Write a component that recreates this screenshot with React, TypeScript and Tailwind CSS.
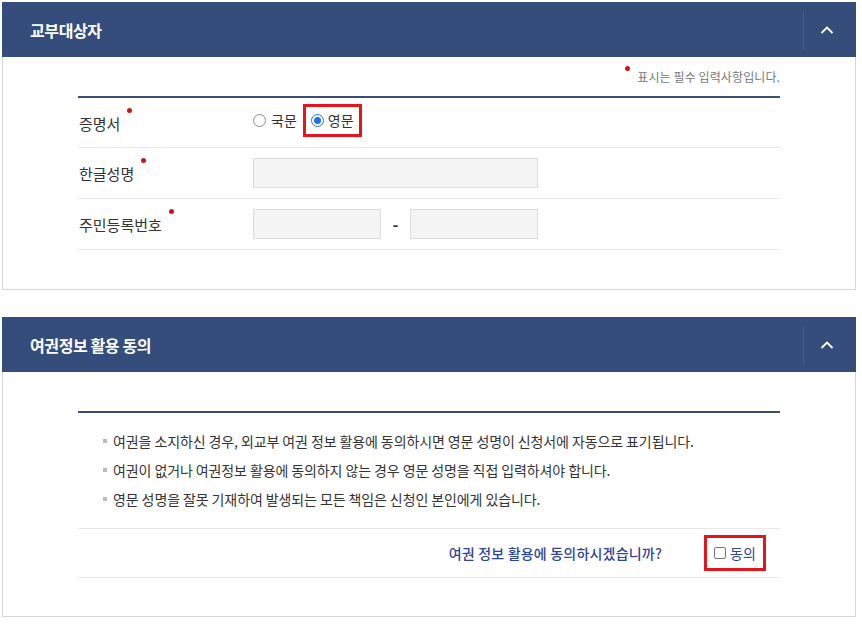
import React from 'react';

const FONT = { fontFamily: '"Noto Sans CJK KR", "Noto Sans", sans-serif' };

// ── Section header with collapse chevron ──
function PanelHeader({ title }: { title: string }) {
  return (
    <div className="h-[55px] bg-[#354d7a] flex items-center justify-between">
      <h2 className="pl-[28px] text-white text-[16px] font-bold tracking-[-0.4px] leading-none">{title}</h2>
      <div className="h-full flex items-center">
        <div className="w-px h-[38px] bg-[#4a5f88]" />
        <button className="w-[46px] mr-[6px] h-full flex items-center justify-center">
          <svg width="14" height="8" viewBox="0 0 14 8" fill="none">
            <polyline points="1.5,7 7,1.5 12.5,7" stroke="#ffffff" strokeWidth="1.8" />
          </svg>
        </button>
      </div>
    </div>
  );
}

function Req() {
  return <span className="absolute -right-[12px] -top-[5px] w-[5px] h-[5px] rounded-full bg-[#c8161d]" />;
}

function FieldRow({ label, h, children }: { label: string; h: string; children: React.ReactNode }) {
  return (
    <div className={`${h} flex items-center border-b border-[#e8e8e8]`}>
      <div className="w-[175px] pl-[1px]">
        <span className="relative text-[15px] text-[#333] leading-none">
          {label}
          <Req />
        </span>
      </div>
      {children}
    </div>
  );
}

const inputCls = 'h-[30px] bg-[#f4f4f4] border border-[#dcdcdc]';

export default function App() {
  return (
    <div className="min-h-screen bg-white pt-[2px] pl-[2px]" style={FONT}>
      {/* ── 교부대상자 ── */}
      <section className="w-[854px]">
        <PanelHeader title="교부대상자" />
        <div className="border-x border-b border-[#d6d6d6] px-[75px] pt-[11px] pb-[39px]">
          <div className="h-[17px] flex justify-end items-center">
            <span className="relative text-[12px] text-[#777] leading-none tracking-[0.1px]">
              <span className="absolute -left-[12px] -top-[5px] w-[5px] h-[5px] rounded-full bg-[#c8161d]" />
              표시는 필수 입력사항입니다.
            </span>
          </div>
          <div className="mt-[11px] h-[2px] bg-[#3c4e73]" />

          <FieldRow label="증명서" h="h-[50px]">
            <div className="flex items-center -mt-[4px]">
              <label className="flex items-center gap-[5px] text-[14px] text-[#333]">
                <span className="w-[13px] h-[13px] rounded-full border border-[#8a8a8a] bg-white" />
                국문
              </label>
              <div className="ml-[6px] border-[3px] border-[#e3151d] px-[5px] h-[33px] flex items-center">
                <label className="flex items-center gap-[4px] text-[14px] text-[#333]">
                  <span className="w-[13px] h-[13px] rounded-full border border-[#1a73e8] flex items-center justify-center">
                    <span className="w-[7px] h-[7px] rounded-full bg-[#1a73e8]" />
                  </span>
                  영문
                </label>
              </div>
            </div>
          </FieldRow>

          <FieldRow label="한글성명" h="h-[51px]">
            <div className={`${inputCls} w-[285px]`} />
          </FieldRow>

          <FieldRow label="주민등록번호" h="h-[51px]">
            <div className="flex items-center">
              <div className={`${inputCls} w-[128px]`} />
              <span className="w-[29px] text-center text-[16px] font-bold text-[#333]">-</span>
              <div className={`${inputCls} w-[128px]`} />
            </div>
          </FieldRow>
        </div>
      </section>

      {/* ── 여권정보 활용 동의 ── */}
      <section className="w-[854px] mt-[27px]">
        <PanelHeader title="여권정보 활용 동의" />
        <div className="border-x border-b border-[#d6d6d6] px-[75px] pt-[39px] pb-[38px]">
          <div className="h-[2px] bg-[#3c4e73]" />
          <ul className="pt-[18px] pb-[19px] flex flex-col gap-[9px]">
            {[
              '여권을 소지하신 경우, 외교부 여권 정보 활용에 동의하시면 영문 성명이 신청서에 자동으로 표기됩니다.',
              '여권이 없거나 여권정보 활용에 동의하지 않는 경우 영문 성명을 직접 입력하셔야 합니다.',
              '영문 성명을 잘못 기재하여 발생되는 모든 책임은 신청인 본인에게 있습니다.',
            ].map((t) => (
              <li key={t} className="flex items-center h-[20px] pl-[25px] text-[14px] text-[#333] tracking-[-0.1px]">
                <span className="w-[4px] h-[4px] bg-[#bbb] mr-[6px]" />
                {t}
              </li>
            ))}
          </ul>
          <div className="h-[50px] border-y border-[#e8e8e8] flex items-center justify-end pr-[14px]">
            <span className="text-[14px] font-medium text-[#2f4498] tracking-[0.2px]">여권 정보 활용에 동의하시겠습니까?</span>
            <div className="ml-[42px] border-[3px] border-[#e3151d] h-[36px] w-[62px] flex items-center justify-center">
              <label className="flex items-center gap-[4px] text-[14px] text-[#2f4498]">
                <span className="w-[12px] h-[12px] rounded-[2px] border border-[#777] bg-white" />
                동의
              </label>
            </div>
          </div>
        </div>
      </section>
    </div>
  );
}
